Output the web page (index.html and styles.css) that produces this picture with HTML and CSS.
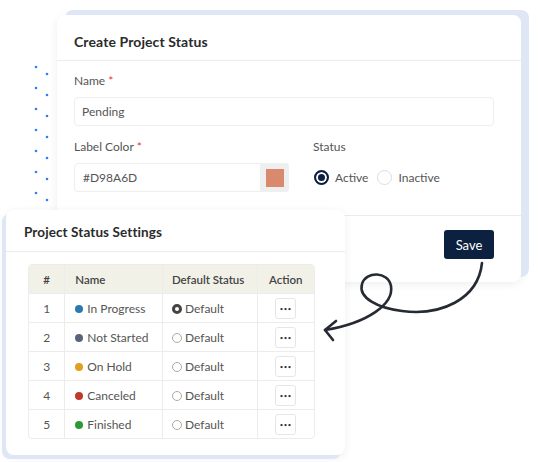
FILE: index.html
```html
<!DOCTYPE html>
<html>
<head>
<meta charset="utf-8">
<link rel="stylesheet" href="styles.css">
</head>
<body>
<div class="stage">
  <svg class="dots" width="20" height="140" viewBox="0 0 20 140">
    <g fill="#2f80ed">
      <circle cx="2" cy="2" r="1.3"/><circle cx="13" cy="9" r="1.3"/>
      <circle cx="2" cy="23" r="1.3"/><circle cx="13" cy="30" r="1.3"/>
      <circle cx="2" cy="44" r="1.3"/><circle cx="13" cy="51" r="1.3"/>
      <circle cx="2" cy="65" r="1.3"/><circle cx="13" cy="72" r="1.3"/>
      <circle cx="2" cy="86" r="1.3"/><circle cx="13" cy="93" r="1.3"/>
      <circle cx="2" cy="107" r="1.3"/><circle cx="13" cy="114" r="1.3"/>
      <circle cx="2" cy="128" r="1.3"/><circle cx="13" cy="135" r="1.3"/>
    </g>
  </svg>

  <div class="card card-create">
    <div class="card-head">Create Project Status</div>
    <div class="card-body">
      <div class="field">
        <label class="lbl">Name <span class="req">*</span></label>
        <div class="input">Pending</div>
      </div>
      <div class="row2">
        <div class="field col-left">
          <label class="lbl">Label Color <span class="req">*</span></label>
          <div class="input color-input">
            <span class="color-text">#D98A6D</span>
            <span class="swatch-box"><span class="swatch"></span></span>
          </div>
        </div>
        <div class="field col-right">
          <label class="lbl">Status</label>
          <div class="radios">
            <span class="radio-item"><span class="radio on"></span>Active</span>
            <span class="radio-item"><span class="radio"></span>Inactive</span>
          </div>
        </div>
      </div>
    </div>
    <div class="card-foot">
      <button class="btn-save">Save</button>
    </div>
  </div>

  <div class="card card-settings">
    <div class="card-head small">Project Status Settings</div>
    <div class="table-wrap">
      <table class="tbl">
        <thead>
          <tr><th class="c-num">#</th><th class="c-name">Name</th><th class="c-def">Default Status</th><th class="c-act">Action</th></tr>
        </thead>
        <tbody>
          <tr><td class="c-num">1</td><td class="c-name"><span class="dot" style="background:#2a7ab0"></span>In Progress</td><td class="c-def"><span class="mini-radio on"></span>Default</td><td class="c-act"><span class="more">•••</span></td></tr>
          <tr><td class="c-num">2</td><td class="c-name"><span class="dot" style="background:#5a6478"></span>Not Started</td><td class="c-def"><span class="mini-radio"></span>Default</td><td class="c-act"><span class="more">•••</span></td></tr>
          <tr><td class="c-num">3</td><td class="c-name"><span class="dot" style="background:#e29e1f"></span>On Hold</td><td class="c-def"><span class="mini-radio"></span>Default</td><td class="c-act"><span class="more">•••</span></td></tr>
          <tr><td class="c-num">4</td><td class="c-name"><span class="dot" style="background:#c0392b"></span>Canceled</td><td class="c-def"><span class="mini-radio"></span>Default</td><td class="c-act"><span class="more">•••</span></td></tr>
          <tr><td class="c-num">5</td><td class="c-name"><span class="dot" style="background:#2b9a34"></span>Finished</td><td class="c-def"><span class="mini-radio"></span>Default</td><td class="c-act"><span class="more">•••</span></td></tr>
        </tbody>
      </table>
    </div>
  </div>

  <svg class="arrow" width="538" height="462" viewBox="0 0 538 462">
    <path d="M482 263 C 478 300, 440 316, 402 311 C 378 308, 358 298, 362 284 C 366 271, 388 271, 391 286 C 394 304, 368 323, 325 330" fill="none" stroke="#262a33" stroke-width="2.6" stroke-linecap="round"/>
    <path d="M336 321 L325 330 L333 340" fill="none" stroke="#262a33" stroke-width="2.6" stroke-linecap="round" stroke-linejoin="round"/>
  </svg>
</div>
</body>
</html>
```
FILE: styles.css
```css
* { box-sizing: border-box; }
html, body { margin: 0; padding: 0; background: #ffffff; }
body { font-family: "Lato", "Open Sans", sans-serif; color: #333; }
.stage { position: relative; width: 538px; height: 462px; overflow: hidden; }

.dots { position: absolute; left: 34px; top: 65px; }

.card { position: absolute; background: #fff; border-radius: 8px; }
.card-create {
  left: 57px; top: 15px; width: 464px; height: 267px;
  box-shadow: 8px -5px 0 0 #dfe6f6, 0 2px 10px rgba(0,0,0,0.07);
  display: flex; flex-direction: column;
}
.card-settings {
  left: 6px; top: 210px; width: 339px; height: 245px;
  box-shadow: -4px 4px 0 0 #dfe6f6, 0 2px 10px rgba(0,0,0,0.07);
  z-index: 2;
}

.card-head {
  height: 46px; padding: 18px 17px 0; font-size: 14px; font-weight: 700;
  color: #2b2b2b; border-bottom: 1px solid #ececec; letter-spacing: 0.1px;
}
.card-head.small { height: 42px; padding: 14px 18px 0; font-size: 13.5px; }

.card-body { padding: 12px 27px 0 17px; display: flex; flex-direction: column; gap: 13px; }
.field { display: flex; flex-direction: column; }
.lbl { font-size: 12px; color: #555; height: 16px; line-height: 16px; margin-bottom: 8px; }
.req { color: #e53935; }
.input {
  height: 29px; border: 1px solid #eeeeee; border-radius: 4px;
  font-size: 12px; color: #555; padding: 0 7px; display: flex; align-items: center;
}
.row2 { display: flex; gap: 24px; }
.col-left { width: 215px; }
.col-right { flex: 1; }
.color-input { padding: 0 0 0 8px; justify-content: space-between; }
.swatch-box {
  width: 29px; height: 29px; margin: -1px -1px -1px 0; background: #efefef; border-radius: 0 4px 4px 0;
  display: flex; align-items: center; justify-content: center;
}
.swatch { width: 18px; height: 18px; background: #d98a6d; }

.radios { display: flex; gap: 9px; height: 29px; align-items: center; padding-left: 1px; }
.radio-item { display: flex; align-items: center; font-size: 12px; color: #555; gap: 6px; }
.radio { width: 15px; height: 15px; border-radius: 50%; border: 1.2px solid #ddd; background: #fff; display: inline-block; }
.radio.on { border: 2px solid #0c1f3f; box-shadow: inset 0 0 0 2px #fff; background: #0c1f3f; }

.card-foot {
  margin-top: auto; height: 67px; border-top: 1px solid #ececec;
  display: flex; justify-content: flex-end; align-items: flex-start; padding: 14px 27px 0 0;
}
.btn-save {
  width: 50px; height: 29px; background: #0c2040; color: #fff; border: 0; border-radius: 3px;
  font-family: "Lato", sans-serif; font-size: 13px; padding: 0;
}

.table-wrap { padding: 12px 0 0 22px; }
.tbl { border-collapse: separate; border-spacing: 0; width: 287px; font-size: 12px; color: #555;
  border: 1px solid #ececec; border-radius: 4px; overflow: hidden; }
.tbl th { background: #f1f1e7; font-weight: 600; color: #444; height: 28px; text-align: left; font-size: 11.5px; }
.tbl td { height: 29px; border-top: 1px solid #ececec; }
.tbl th + th, .tbl td + td { border-left: 1px solid #ececec; }
.c-num { width: 36px; text-align: center !important; }
.c-name { width: 98px; padding-left: 10px; white-space: nowrap; }
.c-def { width: 95px; padding-left: 9px; white-space: nowrap; }
.c-act { width: 58px; text-align: center !important; }
.dot { display: inline-block; width: 8px; height: 8px; border-radius: 50%; margin-right: 4px; vertical-align: 0px; }
.mini-radio { display: inline-block; width: 10px; height: 10px; border-radius: 50%; border: 1px solid #aaa; margin-right: 3px; vertical-align: -1px; }
.mini-radio.on { border: 3px solid #444; }
.more {
  display: inline-flex; width: 21px; height: 21px; border: 1px solid #e6e6e6; border-radius: 3px;
  align-items: center; justify-content: center; font-size: 6px; color: #333; letter-spacing: 0.5px; vertical-align: middle;
}

.arrow { position: absolute; left: 0; top: 0; z-index: 3; pointer-events: none; }
```
